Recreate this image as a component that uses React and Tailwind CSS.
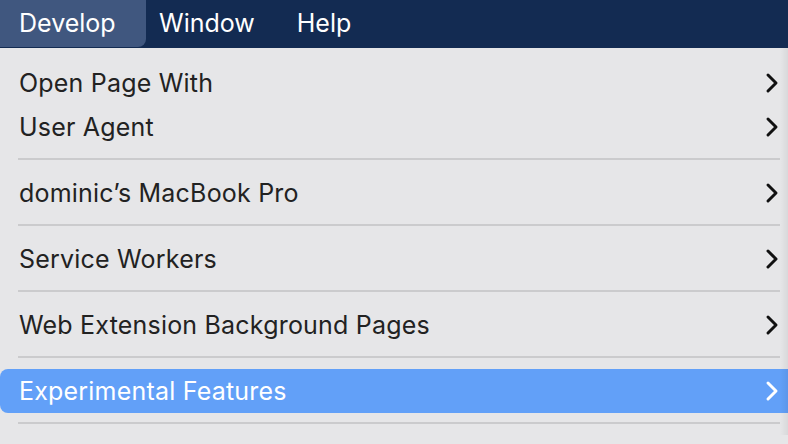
const groups = [
  ['Open Page With', 'User Agent'],
  ["dominic\u2019s MacBook Pro"],
  ['Service Workers'],
  ['Web Extension Background Pages'],
  ['Experimental Features'],
];

function Chevron({ className }) {
  return (
    <svg width="14" height="22" viewBox="0 0 14 22" className={className} fill="none">
      <polyline points="3,3 11,11 3,19" stroke="currentColor" strokeWidth="3" strokeLinecap="round" strokeLinejoin="round" />
    </svg>
  );
}

function Row({ label, active }) {
  return (
    <div
      className={`h-[44px] flex items-center justify-between pl-[19px] pr-[9px] rounded-l-[8px] ${
        active ? 'bg-[#62a0f8] text-white' : 'text-[#222]'
      }`}
    >
      <span className="text-[25px] tracking-[0.2px] pt-[2px]">{label}</span>
      <Chevron className={active ? 'text-white' : 'text-[#111]'} />
    </div>
  );
}

export default function App() {
  return (
    <div className="w-[788px] h-[444px] overflow-hidden bg-[#e6e6e8]" style={{ fontFamily: 'Inter, "Liberation Sans", sans-serif' }}>
      <div className="h-[48px] bg-[#132b52] flex items-stretch text-white text-[25px]">
        <div className="w-[146px] pl-[19px] flex items-center bg-[#40577f] rounded-br-[8px] mb-[1px]">Develop</div>
        <div className="pl-[13px] flex items-center">Window</div>
        <div className="pl-[42px] flex items-center">Help</div>
      </div>
      <div className="pt-[13px] relative">
        {groups.map((g, i) => (
          <div key={i}>
            {g.map((label) => (
              <Row key={label} label={label} active={label === 'Experimental Features'} />
            ))}
            <div className="h-[22px] pt-[9px] pl-[18px] pr-[8px]">
              <div className="h-[2px] bg-[#cbcbcd]" />
            </div>
          </div>
        ))}
        <div className="absolute top-0 right-0 w-[8px] h-full bg-gradient-to-r from-transparent to-black/[0.06]" />
      </div>
    </div>
  );
}
